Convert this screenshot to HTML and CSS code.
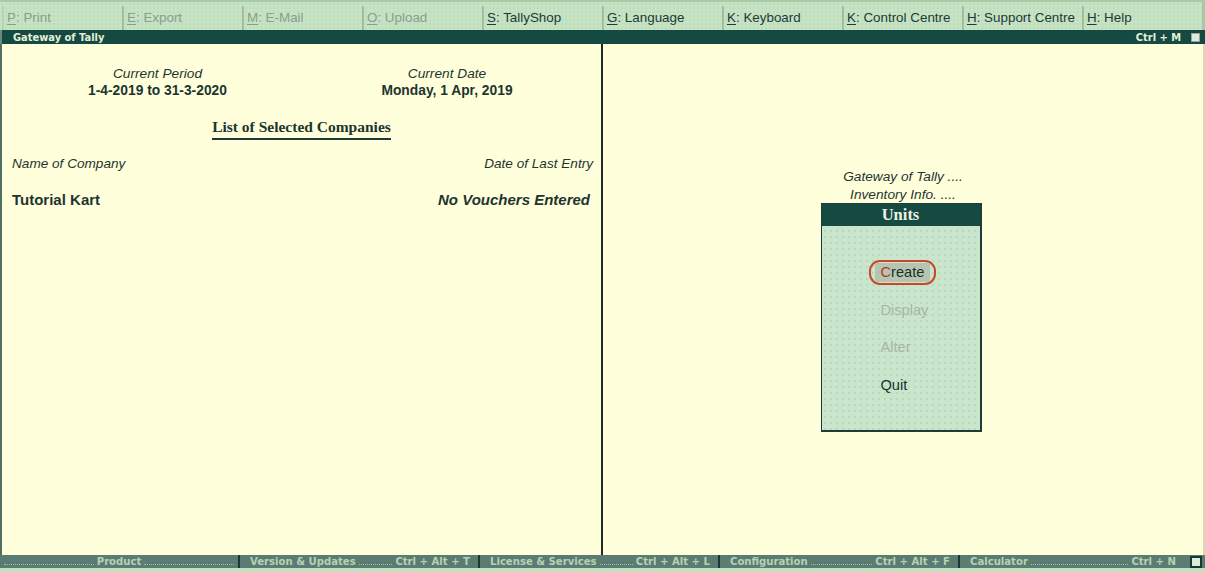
FILE: index.html
```html
<!DOCTYPE html>
<html>
<head>
<meta charset="utf-8">
<link rel="stylesheet" href="styles.css">
</head>
<body>
<div class="app">
  <div class="toolbar">
    <div class="tb off first"><u>P</u>: Print</div>
    <div class="tb off"><u>E</u>: Export</div>
    <div class="tb off"><u>M</u>: E-Mail</div>
    <div class="tb off"><u>O</u>: Upload</div>
    <div class="tb"><u>S</u>: TallyShop</div>
    <div class="tb"><u>G</u>: Language</div>
    <div class="tb"><u>K</u>: Keyboard</div>
    <div class="tb"><u>K</u>: Control Centre</div>
    <div class="tb"><u>H</u>: Support Centre</div>
    <div class="tb"><u>H</u>: Help</div>
  </div>
  <div class="titlebar">
    <span class="title">Gateway of Tally</span>
    <span class="shortcut">Ctrl + M</span>
    <span class="sqbtn"></span>
  </div>
  <div class="main">
    <div class="left">
      <div class="period-row">
        <div class="info">
          <div class="lbl">Current Period</div>
          <div class="val">1-4-2019 to 31-3-2020</div>
        </div>
        <div class="info">
          <div class="lbl">Current Date</div>
          <div class="val">Monday, 1 Apr, 2019</div>
        </div>
      </div>
      <div class="list-title"><span>List of Selected Companies</span></div>
      <div class="row heads">
        <span>Name of Company</span>
        <span>Date of Last Entry</span>
      </div>
      <div class="row company">
        <span class="cname">Tutorial Kart</span>
        <span class="cdate">No Vouchers Entered</span>
      </div>
    </div>
    <div class="right">
      <div class="crumb">Gateway of Tally ....</div>
      <div class="crumb">Inventory Info. ....</div>
      <div class="menu">
        <div class="menu-head">Units</div>
        <div class="menu-body">
          <div class="item sel"><span class="selbox"><span class="selhl"><span class="hot">C</span>reate</span></span></div>
          <div class="item dis">Display</div>
          <div class="item dis">Alter</div>
          <div class="item">Quit</div>
        </div>
      </div>
    </div>
  </div>
  <div class="bottombar">
    <div class="bb c1"><span class="dots"></span><span class="bt">Product</span><span class="dots"></span></div>
    <div class="bb"><span class="bt">Version &amp; Updates</span><span class="dots"></span><span class="bt">Ctrl + Alt + T</span></div>
    <div class="bb"><span class="bt">License &amp; Services</span><span class="dots"></span><span class="bt">Ctrl + Alt + L</span></div>
    <div class="bb"><span class="bt">Configuration</span><span class="dots"></span><span class="bt">Ctrl + Alt + F</span></div>
    <div class="bb last"><span class="bt">Calculator</span><span class="dots"></span><span class="bt">Ctrl + N</span></div>
    <span class="sqbtn dark"></span>
  </div>
</div>
</body>
</html>
```

FILE: styles.css
```css
html, body {
  margin: 0;
  padding: 0;
}
body {
  width: 1205px;
  height: 572px;
  overflow: hidden;
  background: #ffffdb;
  font-family: "Liberation Sans", Arial, sans-serif;
  color: #1d3530;
}
.app {
  display: flex;
  flex-direction: column;
  height: 572px;
}
.toolbar {
  height: 30px;
  box-sizing: border-box;
  display: flex;
  padding: 4px 0 0 2px;
  background-color: #c6e4c4;
  background-image: radial-gradient(circle, #b2d2b1 0.6px, transparent 0.8px);
  background-size: 4px 4px;
  border-top: 2px solid #a9cba8;
  border-right: 3px solid #a9c8a9;
}
.tb {
  width: 120px;
  height: 24px;
  box-sizing: border-box;
  border-left: 2px solid #a2bca1;
  padding: 4px 0 0 3px;
  font-size: 13.4px;
  color: #1e3a36;
  white-space: nowrap;
}
.tb.first { border-left-color: #b7d5b6; }
.tb.off { color: #8d9c8c; }
.tb u {
  text-decoration: underline;
  text-underline-offset: 2px;
}
.titlebar {
  height: 14px;
  background: #144a42;
  display: flex;
  align-items: center;
  border-left: 2px solid #6a8a80;
  padding-left: 11px;
  padding-right: 5px;
  color: #e6f0d8;
  font-family: "DejaVu Sans", Verdana, sans-serif;
  font-size: 9.9px;
  font-weight: bold;
}
.title { flex: 1; }
.shortcut { margin-right: 10px; }
.sqbtn {
  width: 9px;
  height: 9px;
  background: #dfeadc;
  border: 1px solid #8fa89a;
  box-sizing: border-box;
}
.main {
  flex: 1;
  display: flex;
  border-left: 2px solid #4f6e64;
  border-right: 2px solid #d8d8b8;
}
.left {
  width: 601px;
  border-right: 2px solid #1c2a22;
  padding-top: 21px;
  box-sizing: border-box;
}
.period-row {
  display: grid;
  grid-template-columns: 311px 268px;
}
.info {
  text-align: center;
  line-height: 17px;
}
.lbl {
  font-style: italic;
  font-size: 13.7px;
}
.val {
  font-weight: bold;
  font-size: 13.8px;
}
.list-title {
  margin-top: 19px;
  text-align: center;
  font-family: "Liberation Serif", "Times New Roman", serif;
  font-weight: bold;
  font-size: 15.5px;
}
.list-title span {
  display: inline-block;
  padding-bottom: 2px;
  border-bottom: 2px solid #1e3a34;
}
.row {
  display: flex;
  justify-content: space-between;
  padding: 0 8px 0 10px;
}
.heads {
  margin-top: 16px;
  font-style: italic;
  font-size: 13.6px;
}
.company {
  margin-top: 20px;
  font-weight: bold;
  font-size: 15px;
  padding-right: 11px;
}
.cdate { font-style: italic; }
.right {
  flex: 1;
  display: flex;
  flex-direction: column;
  align-items: center;
  padding-top: 124px;
  box-sizing: border-box;
}
.crumb {
  font-style: italic;
  font-size: 13.7px;
  line-height: 17.5px;
}
.menu {
  width: 161px;
  height: 229px;
  margin-right: 4px;
  box-sizing: border-box;
  border: 1px solid #1f3c36;
  border-right-width: 2px;
  border-bottom-width: 2px;
  background-color: #c9e5cc;
  background-image: radial-gradient(circle, #a6c6ab 0.6px, transparent 0.8px);
  background-size: 6px 6px;
  display: flex;
  flex-direction: column;
}
.menu-head {
  height: 22px;
  background: #144a42;
  color: #ecf2e4;
  text-align: center;
  font-family: "Liberation Serif", "Times New Roman", serif;
  font-weight: bold;
  font-size: 16.5px;
  line-height: 22px;
}
.menu-body {
  padding: 38px 0 0 59px;
  display: flex;
  flex-direction: column;
  align-items: flex-start;
}
.item {
  height: 37.7px;
  font-size: 14.6px;
  line-height: 17px;
  color: #1a302c;
}
.item.dis { color: #a7b6a3; }
.selbox {
  display: inline-block;
  padding: 1px 4px;
  margin: -4px 0 0 -12px;
  border: 2px solid #c9472a;
  border-radius: 11px;
}
.selhl {
  display: inline-block;
  padding: 1px 6px;
  background: #b6c4b2;
}
.hot { color: #b63a20; }
.bottombar {
  height: 17px;
  box-sizing: border-box;
  display: flex;
  align-items: flex-start;
  background: #5a7c72;
  border-bottom: 4px solid #c6e0c4;
  padding-right: 3px;
}
.bb {
  width: 240px;
  height: 13px;
  box-sizing: border-box;
  display: flex;
  align-items: center;
  border-right: 2px solid #173a30;
  padding: 0 8px 0 10px;
  font-family: "DejaVu Sans", Verdana, sans-serif;
  font-size: 10.1px;
  font-weight: bold;
  color: #b9d0b2;
  white-space: nowrap;
  gap: 3px;
}
.bb.c1 { padding: 0 4px; }
.bb.last { width: 230px; border-right: none; padding-right: 14px; }
.dots {
  flex: 1;
  height: 0;
  border-bottom: 1px dotted #a5bea0;
  margin-top: 6px;
}
.sqbtn.dark {
  margin-top: 1px;
  width: 12px;
  height: 12px;
  border: 2px solid #173a30;
  background: #dfeadc;
}
```
